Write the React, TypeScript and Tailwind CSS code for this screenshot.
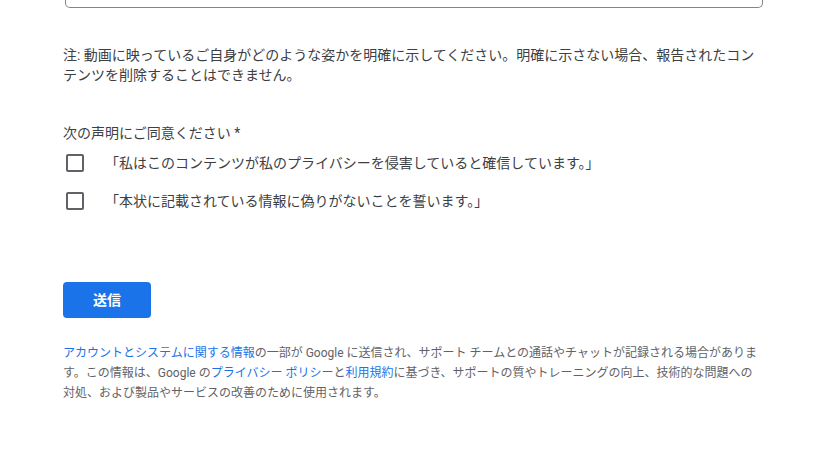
export default function App() {
  const font = { fontFamily: 'Roboto, "Noto Sans CJK JP", sans-serif' }
  return (
    <div className="w-[828px] h-[466px] bg-white overflow-hidden" style={font}>
      <div className="ml-[63px] w-[700px]">
        {/* 入力欄の下端 */}
        <div className="ml-[2px] h-[8px] border-x border-b border-[#80868b] rounded-b-[5px]" />

        {/* 注意書き */}
        <p className="mt-[37px] text-[14px] leading-[20px] text-[#3c4043]">
          注: 動画に映っているご自身がどのような姿かを明確に示してください。明確に示さない場合、報告されたコンテンツを削除することはできません。
        </p>

        {/* 同意 */}
        <p className="mt-[38px] text-[14px] leading-[20px] text-[#3c4043]">
          次の声明にご同意ください *
        </p>
        <div className="mt-px">
          {[
            '「私はこのコンテンツが私のプライバシーを侵害していると確信しています。」',
            '「本状に記載されている情報に偽りがないことを誓います。」',
          ].map((t) => (
            <label key={t} className="flex items-center h-[38px] gap-[21px] cursor-pointer">
              <span className="ml-[3px] w-[18px] h-[18px] border-2 border-[#5f6368] rounded-[2px] shrink-0" />
              <span className="text-[14px] leading-[20px] text-[#3c4043]">{t}</span>
            </label>
          ))}
        </div>

        <button className="mt-[62px] w-[88px] h-[36px] rounded-[4px] bg-[#1a73e8] text-white text-[14px] font-bold">
          送信
        </button>

        <p className="mt-[25px] text-[12px] leading-[20px] text-[#5f6368]">
          <a href="#" className="text-[#1a73e8]">アカウントとシステムに関する情報</a>
          の一部が Google に送信され、サポート チームとの通話やチャットが記録される場合があります。この情報は、Google の
          <a href="#" className="text-[#1a73e8]">プライバシー ポリシー</a>と
          <a href="#" className="text-[#1a73e8]">利用規約</a>
          に基づき、サポートの質やトレーニングの向上、技術的な問題への対処、および製品やサービスの改善のために使用されます。
        </p>
      </div>
    </div>
  )
}
